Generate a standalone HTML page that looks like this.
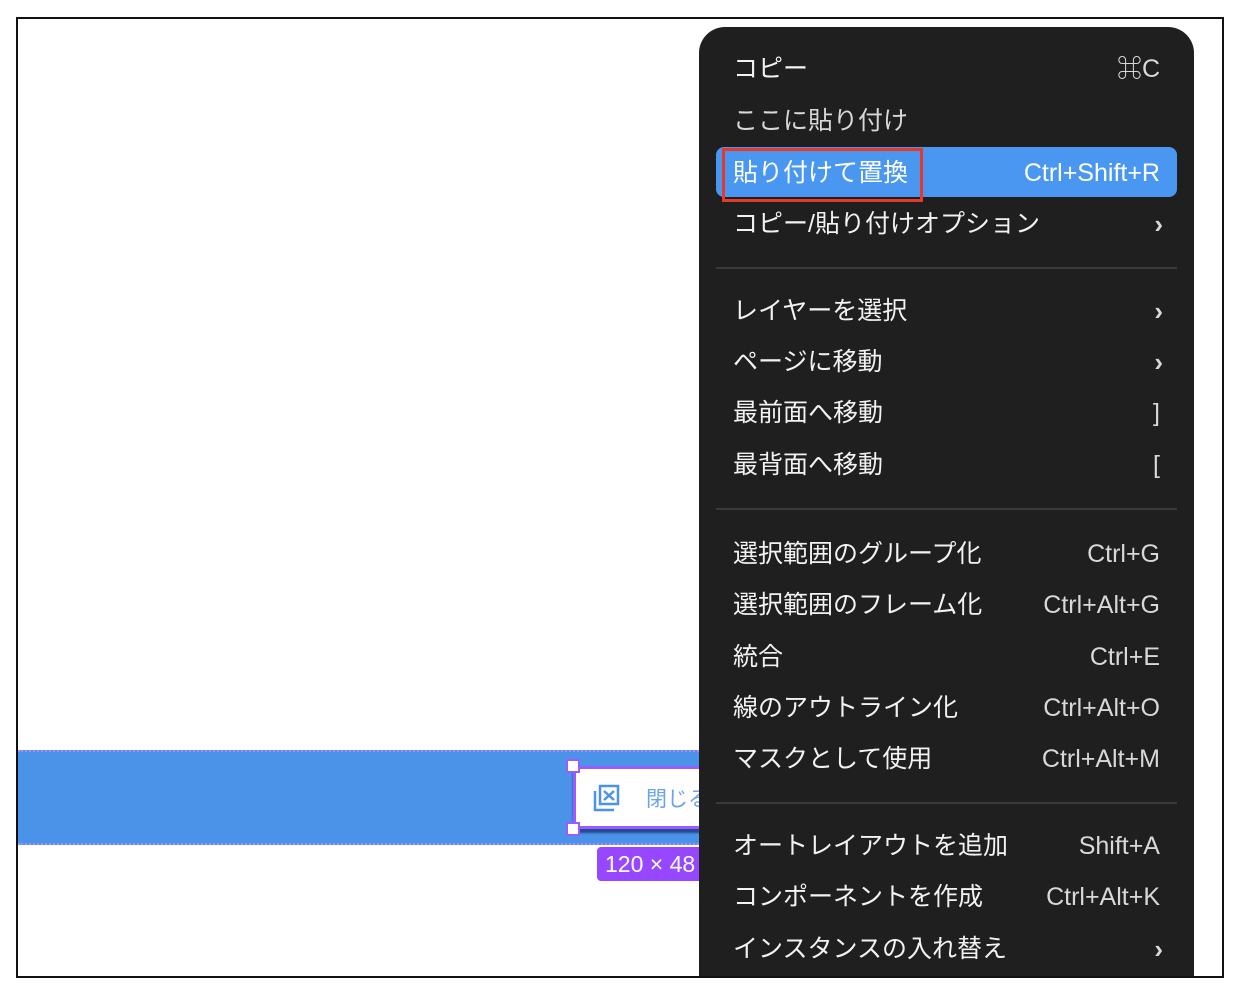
<!DOCTYPE html><html><head><meta charset="utf-8"><style>
*{margin:0;padding:0;box-sizing:border-box}
body{width:1240px;height:994px;background:#fff;position:relative;overflow:hidden;font-family:"Liberation Sans","Noto Sans CJK JP",sans-serif}
.frame{position:absolute;left:16px;top:17px;width:1208px;height:961px;border:2px solid #111;overflow:hidden;background:#fff}
.band{position:absolute;left:0;top:731px;width:700px;height:95px;background:#4a93e8;border-top:2px dotted #a98cff;border-bottom:2px dotted #a98cff}
.btn{position:absolute;left:555px;top:747px;width:160px;height:63px;background:#fff;border:3px solid #9b5cff;box-shadow:0 4px 2px rgba(0,0,60,.5)}
.h{position:absolute;width:14px;height:14px;background:#fff;border:2px solid #9b5cff}
.lbl{position:absolute;left:579px;top:828px;width:130px;height:34px;background:#9747ff;border-radius:4px;color:#fff;font-size:23px;line-height:34px;padding-left:8px}
.menu{position:absolute;left:681px;top:8px;width:495px;height:980px;background:#1f1f1f;border-radius:26px 26px 0 0;color:#f2f2f2;font-size:25px}
.r{position:absolute;left:34px;right:34px;height:44px;line-height:44px;display:flex;justify-content:space-between}
.r span:last-child{color:#d8d8d8}
.sep{position:absolute;left:17px;right:17px;height:2px;background:#3a3a3a}
.hl{position:absolute;left:17px;right:17px;top:120px;height:50px;background:#4a97f2;border-radius:8px}
.red{position:absolute;left:23px;top:121px;width:201px;height:54px;border:3px solid #e53a2a}
.c{font-size:26px;font-weight:bold;margin-right:-3px}
</style></head><body><div class="frame">
<div class="band"></div>
<div class="btn"><svg style="position:absolute;left:16px;top:14px" width="30" height="30" viewBox="0 0 30 30" fill="none" stroke="#4a93e8" stroke-width="2.5"><rect x="8" y="3" width="18" height="18"/><path d="M3 8v19h19M12 8l10 9M22 8l-10 9"/></svg><span style="position:absolute;left:70px;top:14px;color:#6aa3e8;font-size:21px">閉じる</span></div>
<div class="h" style="left:548px;top:740px"></div><div class="h" style="left:548px;top:803px"></div>
<div class="lbl">120 × 48</div>
<div class="menu">
<div class="r" style="top:20px"><span>コピー</span><span>⌘C</span></div>
<div class="r" style="top:72px"><span>ここに貼り付け</span></div>
<div class="hl"></div>
<div class="r" style="top:124px"><span style="color:#fff">貼り付けて置換</span><span style="color:#fff">Ctrl+Shift+R</span></div>
<div class="red"></div>
<div class="r" style="top:175px"><span>コピー/貼り付けオプション</span><span class="c">›</span></div>
<div class="sep" style="top:240px"></div>
<div class="r" style="top:262px"><span>レイヤーを選択</span><span class="c">›</span></div>
<div class="r" style="top:313px"><span>ページに移動</span><span class="c">›</span></div>
<div class="r" style="top:364px"><span>最前面へ移動</span><span>]</span></div>
<div class="r" style="top:416px"><span>最背面へ移動</span><span>[</span></div>
<div class="sep" style="top:481px"></div>
<div class="r" style="top:505px"><span>選択範囲のグループ化</span><span>Ctrl+G</span></div>
<div class="r" style="top:556px"><span>選択範囲のフレーム化</span><span>Ctrl+Alt+G</span></div>
<div class="r" style="top:608px"><span>統合</span><span>Ctrl+E</span></div>
<div class="r" style="top:659px"><span>線のアウトライン化</span><span>Ctrl+Alt+O</span></div>
<div class="r" style="top:710px"><span>マスクとして使用</span><span>Ctrl+Alt+M</span></div>
<div class="sep" style="top:775px"></div>
<div class="r" style="top:797px"><span>オートレイアウトを追加</span><span>Shift+A</span></div>
<div class="r" style="top:848px"><span>コンポーネントを作成</span><span>Ctrl+Alt+K</span></div>
<div class="r" style="top:900px"><span>インスタンスの入れ替え</span><span class="c">›</span></div>
</div></div></body></html>
